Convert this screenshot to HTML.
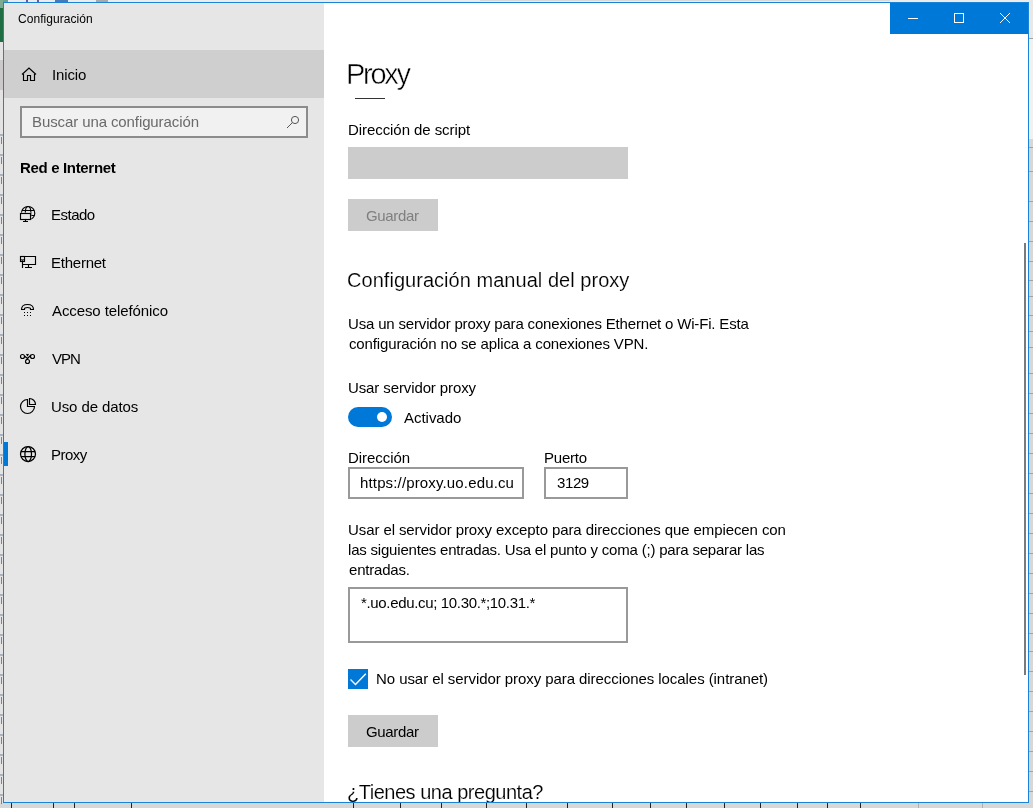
<!DOCTYPE html>
<html lang="es"><head><meta charset="utf-8"><title>Configuración</title>
<style>
*{box-sizing:border-box;margin:0;padding:0}
html,body{width:1033px;height:808px;overflow:hidden;background:#dedede;font-family:"Liberation Sans",sans-serif;color:#000}
.a{position:absolute}
.t{position:absolute;white-space:nowrap;line-height:1;will-change:transform}
.h1{-webkit-text-stroke:0.5px #fff}
.h2{-webkit-text-stroke:0.15px #fff}
svg{position:absolute;left:0;top:0;overflow:visible}
</style></head><body>
<div class="a" style="left:3px;top:2px;width:1026px;height:801px;background:#fff"></div>
<div class="a" style="left:4px;top:3px;width:320px;height:799px;background:#e6e6e6"></div>
<div class="a" style="left:4px;top:50px;width:320px;height:48px;background:#cfcfcf"></div>
<div class="a" style="left:20px;top:106px;width:288px;height:32px;border:2px solid #8c8c8c;background:#f1f1f1"></div>
<div class="a" style="left:4px;top:442px;width:4px;height:24px;background:#0078d7"></div>
<div class="a" style="left:890px;top:2px;width:139px;height:32px;background:#0078d7"></div>
<div class="a" style="left:355px;top:98px;width:30px;height:1px;background:#333"></div>
<div class="a" style="left:348px;top:147px;width:280px;height:32px;background:#ccc"></div>
<div class="a" style="left:348px;top:199px;width:90px;height:32px;background:#ccc"></div>
<div class="a" style="left:348px;top:407px;width:44px;height:20px;border-radius:10px;background:#0078d7"></div>
<div class="a" style="left:377px;top:412px;width:10px;height:10px;border-radius:5px;background:#fff"></div>
<div class="a" style="left:348px;top:467px;width:176px;height:32px;border:2px solid #999;background:#fff"></div>
<div class="a" style="left:544px;top:467px;width:84px;height:32px;border:2px solid #999;background:#fff"></div>
<div class="a" style="left:348px;top:587px;width:280px;height:56px;border:2px solid #999;background:#fff"></div>
<div class="a" style="left:348px;top:669px;width:20px;height:20px;background:#0078d7"></div>
<div class="a" style="left:348px;top:715px;width:90px;height:32px;background:#ccc"></div>
<div class="a" style="left:1024px;top:243px;width:2px;height:432px;background:#7a7a7a"></div>
<div class="t" style="left:18.2px;top:12.9px;font-size:12.0px;letter-spacing:0.05px">Configuración</div>
<div class="t" style="left:52.1px;top:67.0px;font-size:15.0px;letter-spacing:-0.14px">Inicio</div>
<div class="t" style="left:31.6px;top:114.2px;font-size:15.0px;letter-spacing:-0.1px;color:#6a6a6a">Buscar una configuración</div>
<div class="t" style="left:20.0px;top:160.0px;font-size:15.0px;letter-spacing:-0.331px;font-weight:bold">Red e Internet</div>
<div class="t" style="left:50.7px;top:206.8px;font-size:15.0px;letter-spacing:-0.5px">Estado</div>
<div class="t" style="left:50.7px;top:254.8px;font-size:15.0px;letter-spacing:-0.243px">Ethernet</div>
<div class="t" style="left:52.4px;top:302.8px;font-size:15.0px;letter-spacing:-0.1px">Acceso telefónico</div>
<div class="t" style="left:52.4px;top:350.8px;font-size:15.0px;letter-spacing:-0.95px">VPN</div>
<div class="t" style="left:50.7px;top:398.8px;font-size:15.0px;letter-spacing:-0.109px">Uso de datos</div>
<div class="t" style="left:50.7px;top:446.8px;font-size:15.0px;letter-spacing:-0.5px">Proxy</div>
<div class="t h1" style="left:345.7px;top:60.1px;font-size:29.0px;letter-spacing:-2.3px">Proxy</div>
<div class="t" style="left:348.0px;top:121.9px;font-size:15.0px;letter-spacing:-0.067px">Dirección de script</div>
<div class="t" style="left:365.8px;top:208.0px;font-size:15.0px;letter-spacing:-0.35px;color:#7f7f7f">Guardar</div>
<div class="t h2" style="left:346.7px;top:270.1px;font-size:20.0px;letter-spacing:0.038px">Configuración manual del proxy</div>
<div class="t" style="left:347.7px;top:316.2px;font-size:15.0px;letter-spacing:-0.173px">Usa un servidor proxy para conexiones Ethernet o Wi-Fi. Esta</div>
<div class="t" style="left:348.7px;top:336.1px;font-size:15.0px;letter-spacing:-0.133px">configuración no se aplica a conexiones VPN.</div>
<div class="t" style="left:347.7px;top:380.2px;font-size:15.0px;letter-spacing:-0.111px">Usar servidor proxy</div>
<div class="t" style="left:403.9px;top:409.6px;font-size:15.0px;letter-spacing:-0.029px">Activado</div>
<div class="t" style="left:348.0px;top:450.0px;font-size:15.0px;letter-spacing:-0.05px">Dirección</div>
<div class="t" style="left:544.3px;top:450.0px;font-size:15.0px;letter-spacing:-0.22px">Puerto</div>
<div class="t" style="left:359.6px;top:474.8px;font-size:15.0px;letter-spacing:0.15px">https://proxy.uo.edu.cu</div>
<div class="t" style="left:556.7px;top:474.8px;font-size:15.0px;letter-spacing:-0.4px">3129</div>
<div class="t" style="left:348.0px;top:522.4px;font-size:15.0px;letter-spacing:-0.09px">Usar el servidor proxy excepto para direcciones que empiecen con</div>
<div class="t" style="left:348.0px;top:542.2px;font-size:15.0px;letter-spacing:-0.2px">las siguientes entradas. Usa el punto y coma (;) para separar las</div>
<div class="t" style="left:349.0px;top:562.0px;font-size:15.0px;letter-spacing:-0.212px">entradas.</div>
<div class="t" style="left:360.6px;top:595.0px;font-size:15.0px;letter-spacing:-0.337px">*.uo.edu.cu; 10.30.*;10.31.*</div>
<div class="t" style="left:376.0px;top:670.6px;font-size:15.0px;letter-spacing:-0.065px">No usar el servidor proxy para direcciones locales (intranet)</div>
<div class="t" style="left:365.8px;top:723.9px;font-size:15.0px;letter-spacing:-0.35px">Guardar</div>
<div class="t h2" style="left:347.2px;top:781.8px;font-size:20.0px;letter-spacing:-0.48px">¿Tienes una pregunta?</div>
<svg width="1033" height="808" viewBox="0 0 1033 808" fill="none" stroke="#000" stroke-width="1.15">
<!-- home -->
<path d="M22 74.500L29 68L36 74.500"/><path d="M23.500 74V80.500H27.500V75.500H30.500V80.500H34.500V74"/>
<!-- search -->
<g stroke="#555" stroke-width="1"><circle cx="295" cy="120" r="3.600"/><path d="M292.300 122.700L287 128"/></g>
<!-- estado -->
<circle cx="28.100" cy="213.200" r="6.700"/><ellipse cx="28.100" cy="213.200" rx="2.800" ry="6.700"/><path d="M22 210.500H34.200M22 215.500H34.200"/>
<rect x="19.500" y="212.600" width="11.800" height="9.900" fill="#e6e6e6" stroke="none"/>
<rect x="20.500" y="213.500" width="10" height="6"/><path d="M25.500 219.500V221.500M23 221.500H28"/>
<!-- ethernet -->
<path d="M20.500 256.500H35.500V264.500H22.500"/><path d="M28.500 264.500V267.500M25 267.500H32"/>
<rect x="20.500" y="256.500" width="4" height="5"/><path d="M22.500 261.500V268"/><path d="M21.800 259V260.300H23.200V259" stroke-width="0.900"/>
<!-- phone -->
<path d="M21.500 309.500C21.500 306 24 304.500 27.500 304.500C31 304.500 33.500 306 33.500 309.500H30.500V308.500C30.500 307.500 29.500 307.500 27.500 307.500C25.500 307.500 24.500 307.500 24.500 308.500V309.500Z"/>
<path d="M24 312.500H25M27 312.500H28M30 312.500H31M24 315.500H25M27 315.500H28M30 315.500H31" stroke-width="1"/>
<!-- vpn -->
<circle cx="22.500" cy="356.500" r="2"/><circle cx="32.500" cy="356.500" r="2"/><circle cx="27.500" cy="361.500" r="2"/>
<path d="M24.500 356L27.500 358.500M31 355L26 360M26.500 354L27.500 355.500L28.500 354"/>
<!-- data -->
<path d="M27.500 406.500V399.500A7 7 0 1 0 34.500 406.500Z"/><path d="M29.500 404.500V398.500A6 6 0 0 1 35.500 404.500Z"/>
<!-- globe -->
<g stroke-width="1.250"><circle cx="28" cy="454" r="7.500"/><ellipse cx="28.200" cy="454" rx="3.300" ry="7.500"/><path d="M21 451.500H35M21 456.500H35"/></g>
<!-- window buttons -->
<g stroke="#fff" stroke-width="1"><path d="M908 18.500H918"/><rect x="954.500" y="13.500" width="9" height="9"/><path d="M1000 13L1010 23M1010 13L1000 23"/></g>
<!-- check -->
<path d="M350.500 679.500L355.500 684.500L365.800 673.800" stroke="#fff" stroke-width="1.400"/>
</svg>

<div class="a" style="left:0;top:0;width:1033px;height:2px;background:#ececec"></div>
<div class="a" style="left:0;top:0;width:8px;height:2px;background:#6fa187"></div>
<div class="a" style="left:26px;top:0;width:2px;height:2px;background:#7a4fa3"></div>
<div class="a" style="left:37px;top:0;width:2px;height:2px;background:#7a4fa3"></div>
<div class="a" style="left:55px;top:0;width:13px;height:2px;background:#4a7ab5"></div>
<div class="a" style="left:96px;top:0;width:12px;height:2px;background:#a9a9a9"></div>
<div class="a" style="left:480px;top:0;width:410px;height:1px;background:#d9d9d9"></div>
<div class="a" style="left:0;top:0;width:3px;height:808px;background:#e3e3e3"></div>
<div class="a" style="left:0;top:0;width:3px;height:8px;background:#7dab92"></div>
<div class="a" style="left:0;top:8px;width:3px;height:34px;background:#1f6e43"></div>
<div class="a" style="left:0;top:60px;width:3px;height:30px;background:#cbc9c9"></div>
<div class="a" style="left:1029px;top:0;width:4px;height:808px;background:#d7d7d7"></div>
<div class="a" style="left:1029px;top:0;width:4px;height:38px;background:#e8e8e8"></div>
<div class="a" style="left:1029px;top:39px;width:4px;height:100px;background:#f1f1f1"></div>
<div class="a" style="left:0;top:803px;width:1033px;height:5px;background:#d7d7d7"></div>
<svg width="1033" height="808" viewBox="0 0 1033 808" fill="none"><path d="M1029 38.5H1033M1029 147.5H1033M1029 171.5H1033M1029 201.5H1033M1029 221.5H1033M1029 241.5H1033M1029 261.5H1033M1029 280.5H1033M1029 296.5H1033M1029 315.5H1033M1029 331.5H1033M1029 347.5H1033M1029 373.5H1033M1029 393.5H1033M1029 413.5H1033M1029 433.5H1033M1029 453.5H1033M1029 473.5H1033M1029 493.5H1033M1029 513.5H1033M1029 533.5H1033M1029 553.5H1033M1029 573.5H1033M1029 593.5H1033M1029 613.5H1033M1029 633.5H1033M1029 651.5H1033M1029 671.5H1033M1029 691.5H1033M1029 711.5H1033M1029 731.5H1033M1029 751.5H1033M1029 771.5H1033M1029 791.5H1033" stroke="#a3a3a3"/><path d="M11.5 803V808M53.5 803V808M74.5 803V808M131.5 803V808M353.5 803V808M400.5 803V808M441.5 803V808M486.5 803V808M526.5 803V808M567.5 803V808M612.5 803V808M650.5 803V808M686.5 803V808M724.5 803V808M760.5 803V808M797.5 803V808M827.5 803V808M860.5 803V808" stroke="#222"/><path d="M918.5 803V808M982.5 803V808" stroke="#b0b0b0"/><path d="M0 135H3M1.5 137V144M0 155H3M1.5 157V164M0 175H3M1.5 177V184M0 195H3M1.5 197V204M0 215H3M1.5 217V224M0 235H3M1.5 237V244M0 255H3M1.5 257V264M0 275H3M1.5 277V284M0 295H3M1.5 297V304M0 315H3M1.5 317V324M0 335H3M1.5 337V344M0 355H3M1.5 357V364M0 375H3M1.5 377V384M0 395H3M1.5 397V404M0 415H3M1.5 417V424M0 435H3M1.5 437V444M0 455H3M1.5 457V464M0 475H3M1.5 477V484M0 495H3M1.5 497V504M0 515H3M1.5 517V524M0 535H3M1.5 537V544M0 555H3M1.5 557V564M0 575H3M1.5 577V584M0 595H3M1.5 597V604M0 615H3M1.5 617V624M0 635H3M1.5 637V644M0 655H3M1.5 657V664M0 675H3M1.5 677V684M0 695H3M1.5 697V704M0 715H3M1.5 717V724M0 735H3M1.5 737V744M0 755H3M1.5 757V764M0 775H3M1.5 777V784M0 795H3M1.5 797V804" stroke="#5b6b8c" stroke-opacity="0.8"/></svg>
<div class="a" style="left:3px;top:2px;width:1026px;height:801px;border:1px solid #1883d7"></div>
</body></html>
